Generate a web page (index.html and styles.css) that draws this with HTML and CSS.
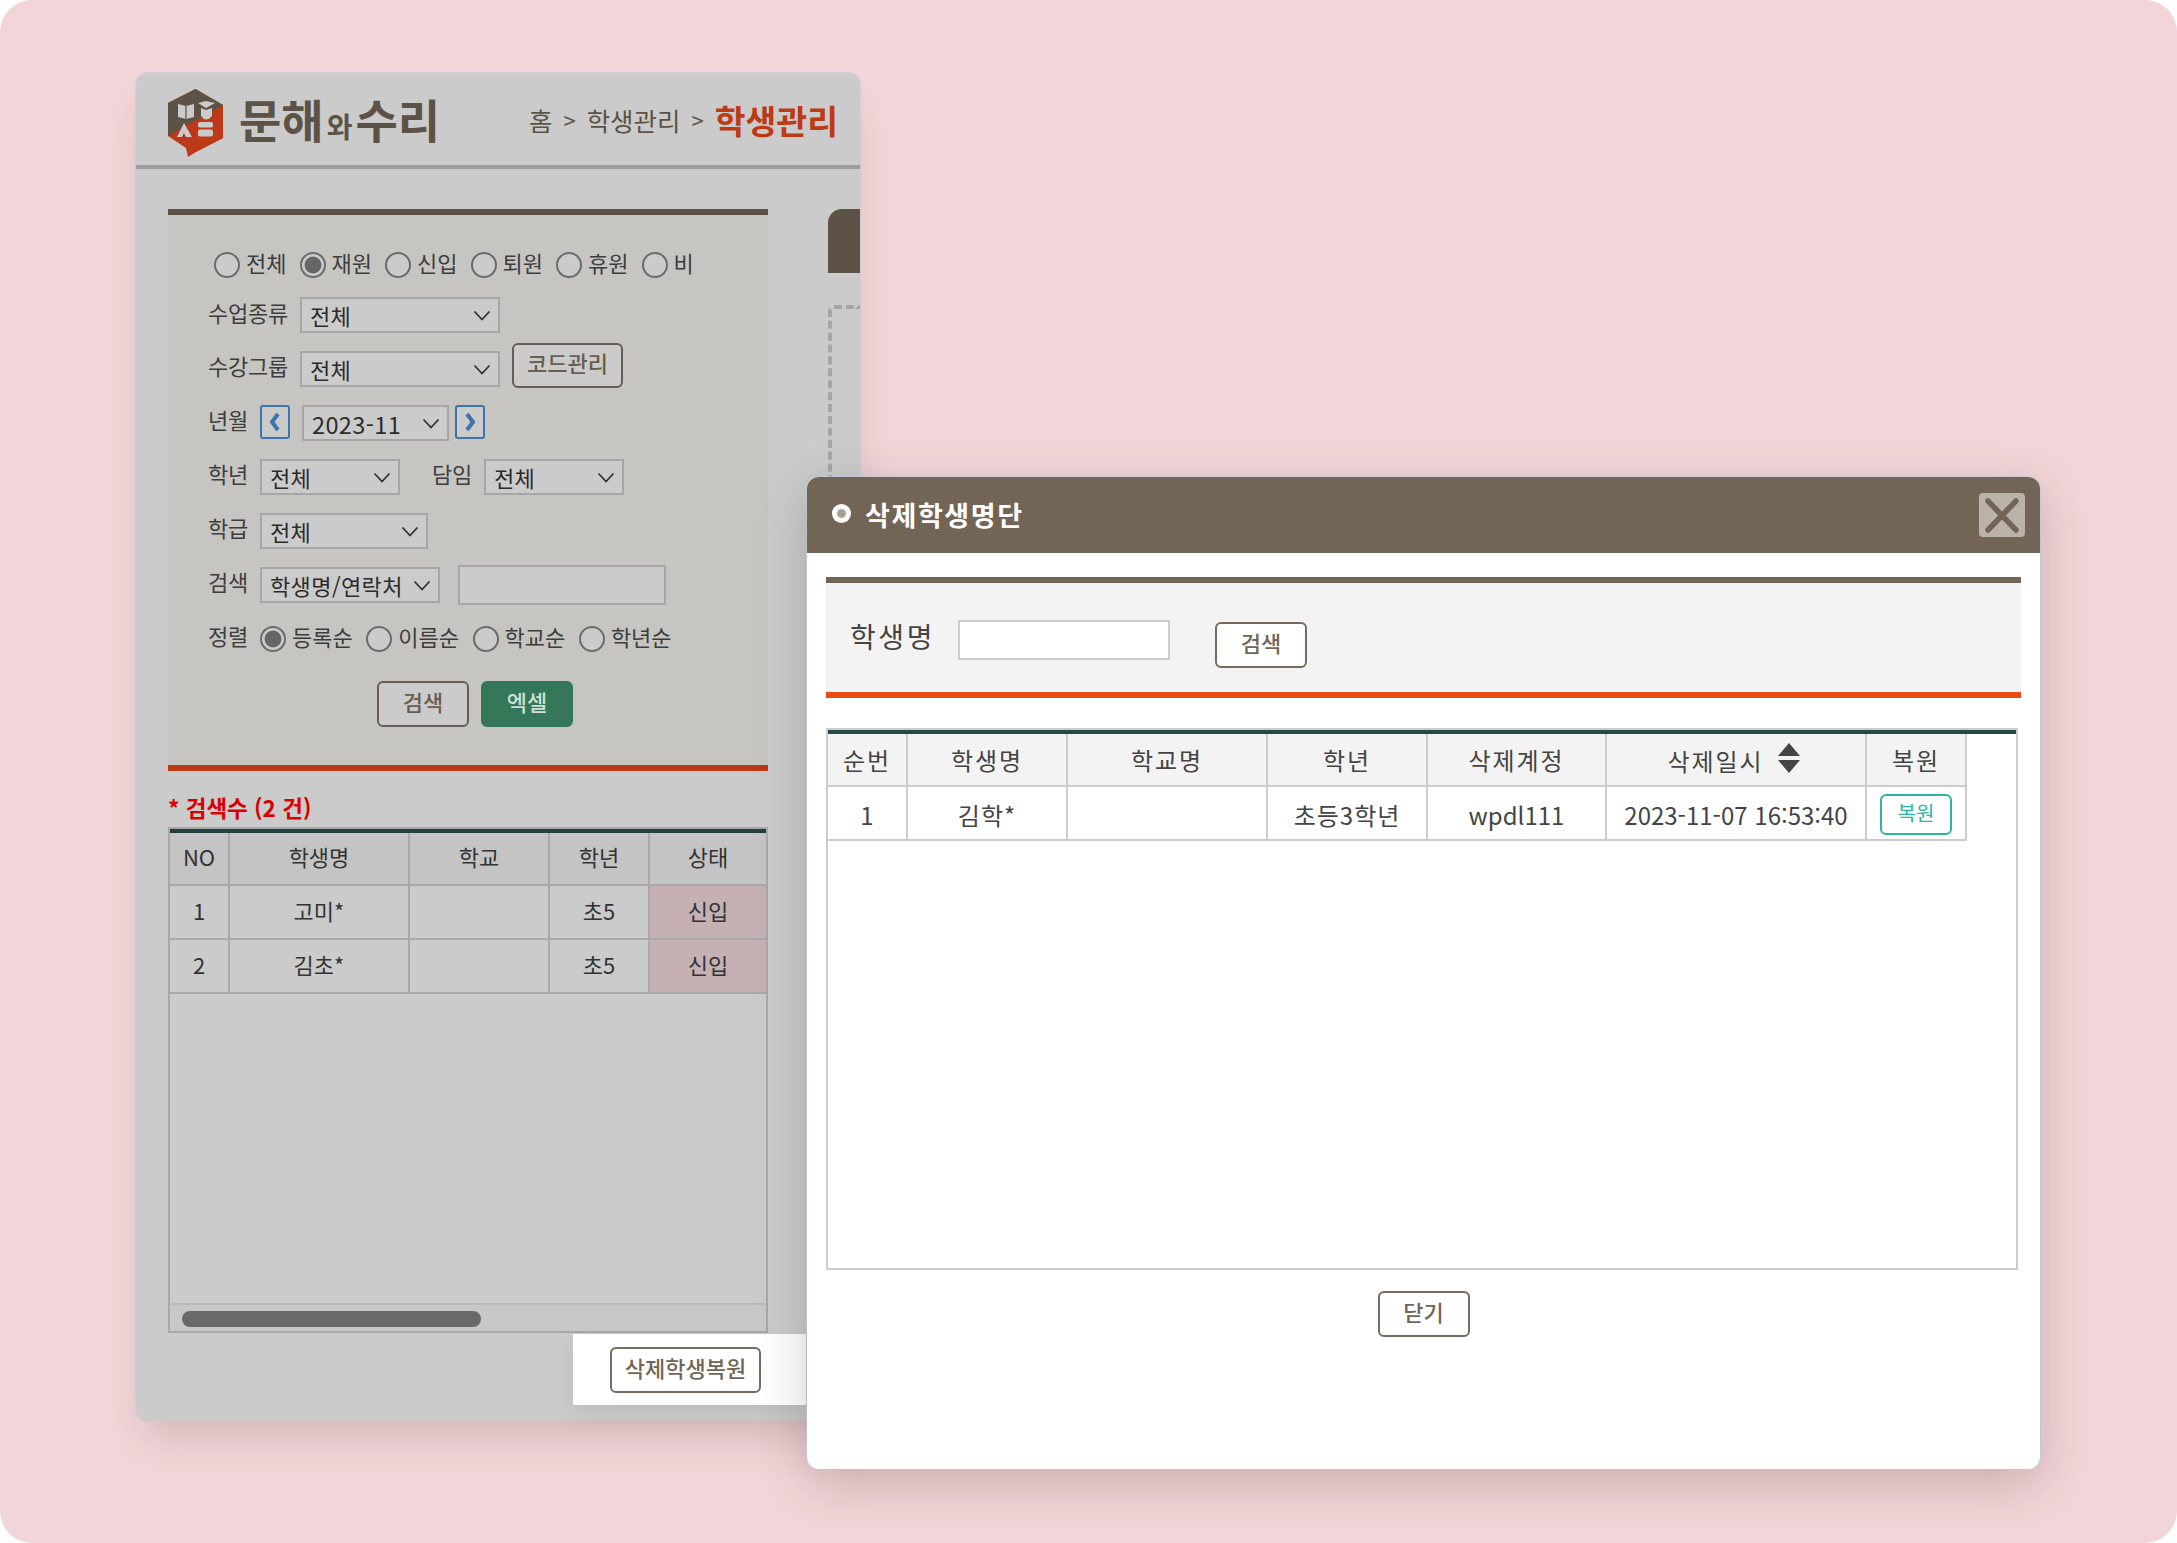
FILE: index.html
```html
<!DOCTYPE html>
<html lang="ko">
<head>
<meta charset="utf-8">
<title>삭제학생명단</title>
<link rel="stylesheet" href="styles.css">
</head>
<body>
<main class="canvas">
  <section class="win">
    <header class="win-head">
      <div class="brand">
        <svg class="logo" viewBox="0 0 56 68" width="56" height="68" aria-hidden="true">
          <path d="M27.5 0L55 16V49.3L28 63L20 68L18 59L0 47V14Z" fill="#bc3a1a"/>
          <path d="M27.5 0L55 16L0 47V14Z" fill="#5d5246"/>
          <path d="M10 15L18 17L26 15V28L18 30L10 28Z" fill="#cbcbcb"/>
          <path d="M18 17V30" stroke="#5d5246" stroke-width="1.2"/>
          <path d="M30 14L38 12L47 14L38 19Z" fill="#cbcbcb"/>
          <path d="M33 19L38 21L44 19V27Q38 34 33 27Z" fill="#cbcbcb"/>
          <path d="M16 34L24 48H18L16 44L14 48H9Z" fill="#cbcbcb"/>
          <rect x="30" y="33" width="15" height="5.5" rx="2" fill="#cbcbcb"/>
          <rect x="30" y="40.5" width="15" height="7" rx="2" fill="#cbcbcb"/>
        </svg>
        <span class="brand-name">문해<small class="brand-and">와</small>수리</span>
      </div>
      <nav class="crumbs">
        <span>홈</span><span class="crumb-sep">&gt;</span><span>학생관리</span><span class="crumb-sep">&gt;</span><strong class="crumb-now">학생관리</strong>
      </nav>
    </header>

    <div class="win-body">
      <div class="main-col">
        <form class="filter">
          <div class="row row-top">
            <label class="radio-item"><input type="radio" name="st"><span>전체</span></label>
            <label class="radio-item"><input type="radio" name="st" checked><span>재원</span></label>
            <label class="radio-item"><input type="radio" name="st"><span>신입</span></label>
            <label class="radio-item"><input type="radio" name="st"><span>퇴원</span></label>
            <label class="radio-item"><input type="radio" name="st"><span>휴원</span></label>
            <label class="radio-item"><input type="radio" name="st"><span>비</span></label>
          </div>
          <div class="row row-second">
            <span class="lbl">수업종류</span>
            <select class="sel sel-200"><option>전체</option></select>
          </div>
          <div class="row">
            <span class="lbl">수강그룹</span>
            <select class="sel sel-200"><option>전체</option></select>
            <button type="button" class="btn btn-code">코드관리</button>
          </div>
          <div class="row">
            <span class="lbl">년월</span>
            <button type="button" class="step"><svg viewBox="0 0 16 22" width="16" height="22" aria-hidden="true"><path d="M11 3L5 11L11 19" fill="none" stroke="#3c74ad" stroke-width="4"/></svg></button>
            <select class="sel sel-month"><option>2023-11</option></select>
            <button type="button" class="step step-next"><svg viewBox="0 0 16 22" width="16" height="22" aria-hidden="true"><path d="M5 3L11 11L5 19" fill="none" stroke="#3c74ad" stroke-width="4"/></svg></button>
          </div>
          <div class="row">
            <span class="lbl">학년</span>
            <select class="sel sel-140"><option>전체</option></select>
            <span class="lbl lbl-pair">담임</span>
            <select class="sel sel-140"><option>전체</option></select>
          </div>
          <div class="row">
            <span class="lbl">학급</span>
            <select class="sel sel-168"><option>전체</option></select>
          </div>
          <div class="row">
            <span class="lbl">검색</span>
            <select class="sel sel-180"><option>학생명/연락처</option></select>
            <input class="txt" type="text">
          </div>
          <div class="row">
            <span class="lbl">정렬</span>
            <label class="radio-item sort-item"><input type="radio" name="so" checked><span>등록순</span></label>
            <label class="radio-item sort-item"><input type="radio" name="so"><span>이름순</span></label>
            <label class="radio-item sort-item"><input type="radio" name="so"><span>학교순</span></label>
            <label class="radio-item sort-item"><input type="radio" name="so"><span>학년순</span></label>
          </div>
          <div class="actions">
            <button type="button" class="btn btn-act">검색</button>
            <button type="button" class="btn btn-act btn-green">엑셀</button>
          </div>
        </form>

        <p class="count">* 검색수 (2 건)</p>

        <div class="grid-box">
          <table class="tbl tbl-left">
            <colgroup><col class="c60"><col class="c180"><col class="c140"><col class="c100"><col></colgroup>
            <thead>
              <tr><th>NO</th><th>학생명</th><th>학교</th><th>학년</th><th>상태</th></tr>
            </thead>
            <tbody>
              <tr><td>1</td><td>고미*</td><td></td><td>초5</td><td class="new">신입</td></tr>
              <tr><td>2</td><td>김초*</td><td></td><td>초5</td><td class="new">신입</td></tr>
            </tbody>
          </table>
          <div class="scroll"><div class="thumb"></div></div>
        </div>
      </div>
      <aside class="side-col">
        <div class="side-tab"></div>
        <div class="side-dash"></div>
      </aside>
    </div>
  </section>

  <div class="spot"><button type="button" class="btn btn-spot">삭제학생복원</button></div>

  <section class="modal">
    <header class="modal-head">
      <h1 class="modal-title"><span class="dot"></span>삭제학생명단</h1>
      <button type="button" class="close"><svg viewBox="0 0 46 44" width="46" height="44" aria-hidden="true"><path d="M9 8L37 37M37 8L9 37" stroke="#736555" stroke-width="5.5" stroke-linecap="round"/></svg></button>
    </header>
    <div class="modal-body">
      <form class="m-search">
        <span class="m-lbl">학생명</span>
        <input class="m-input" type="text">
        <button type="button" class="btn m-btn">검색</button>
      </form>
      <div class="m-box">
        <table class="tbl tbl-modal">
          <colgroup><col class="m1"><col class="m2"><col class="m3"><col class="m4"><col class="m5"><col class="m6"><col class="m7"></colgroup>
          <thead>
            <tr>
              <th>순번</th><th>학생명</th><th>학교명</th><th>학년</th><th>삭제계정</th>
              <th class="th-sort">삭제일시<svg class="sort" viewBox="0 0 24 30" width="24" height="30" aria-hidden="true"><path d="M12 0L23 13H1Z" fill="#444"/><path d="M12 30L23 17H1Z" fill="#444"/></svg></th>
              <th>복원</th>
            </tr>
          </thead>
          <tbody>
            <tr>
              <td>1</td><td class="kr">김학*</td><td></td><td class="kr">초등3학년</td><td>wpdl111</td><td>2023-11-07 16:53:40</td>
              <td><button type="button" class="restore">복원</button></td>
            </tr>
          </tbody>
        </table>
      </div>
      <div class="m-foot"><button type="button" class="btn m-close">닫기</button></div>
    </div>
  </section>
</main>
</body>
</html>
```

FILE: styles.css
```css
* { box-sizing: border-box; }
html, body { margin: 0; padding: 0; }
body {
  background: #fff;
  font-family: "Noto Sans CJK KR", "Noto Sans", sans-serif;
  color: #3d3d3d;
}
button, select, input { font-family: inherit; }

.canvas { position: relative; width: 2177px; height: 1543px; overflow: hidden; background: #f2d5d8; border-radius: 32px; }

/* left window */
.win {
  position: absolute; left: 136px; top: 73px; width: 724px; height: 1348px;
  background: #cbcbcb; border-radius: 12px; overflow: hidden;
  box-shadow: 0 0 0 1px rgba(190,198,215,.55), 0 26px 40px -12px rgba(80,50,50,.2);
}
.win-head {
  height: 96px; border-bottom: 4px solid #9c9c9c;
  display: flex; align-items: center; justify-content: space-between;
  padding: 0 22px 0 32px;
}
.brand { display: flex; align-items: center; gap: 15px; padding-top: 8px; }
.logo { display: block; }
.brand-name { font-size: 46px; font-weight: 700; color: #5d5246; line-height: 1; padding-bottom: 11px; white-space: nowrap; }
.brand-and { font-size: 28px; font-weight: 700; margin: 0 3px; }
.crumbs { display: flex; align-items: center; font-size: 25.5px; color: #5d5246; }
.crumb-sep { font-size: 22px; margin: 0 11px; }
.crumb-now { font-size: 33.5px; font-weight: 700; color: #bc3a14; }

.win-body { display: flex; padding: 40px 0 0 32px; }
.main-col { width: 600px; flex: none; }
.side-col { flex: 1; margin-left: 60px; }
.side-tab { height: 64px; background: #5d5246; border-top-left-radius: 14px; }
.side-dash { margin-top: 32px; height: 300px; border-left: 4px dashed #a6a6a6; border-top: 4px dashed #a6a6a6; border-top-left-radius: 6px; }

.filter {
  height: 562px; background: #c6c5c1;
  border-top: 6px solid #5d5246; border-bottom: 6px solid #bc3a14;
  padding: 25px 0 0 40px;
}
.row { display: flex; align-items: center; height: 54px; }
.row-top { height: 50px; padding-left: 6px; }
.row-second { height: 52px; padding-bottom: 2px; }
.lbl { font-size: 22px; color: #3d3d3d; margin-right: 12px; line-height: 1; padding-bottom: 8px; white-space: nowrap; letter-spacing: -.25px; }
.row-second .lbl { padding-bottom: 6px; }
.lbl-pair { margin-left: 32px; }
.radio-item { display: flex; align-items: center; gap: 6px; width: 85.5px; font-size: 22px; flex: none; color: #3d3d3d; }
.radio-item span { padding-bottom: 6px; line-height: 1; }
.sort-item { width: 106.3px; }
.radio-item input {
  appearance: none; -webkit-appearance: none; margin: 0; flex: none;
  width: 26px; height: 26px; border-radius: 50%;
  border: 2px solid #6b6b6b; background: #cbcbcb;
}
.radio-item input:checked { background: radial-gradient(circle, #666 0, #666 8px, #cbcbcb 8.8px); }

.sel {
  appearance: none; -webkit-appearance: none; height: 36px; flex: none;
  border: 2px solid #a6a6a6; border-radius: 0; background-color: #cbcbcb;
  font-size: 22px; color: #2b2b2b; padding: 0 24px 0 8px; letter-spacing: .4px;
  background-image: url("data:image/svg+xml,%3Csvg xmlns='http://www.w3.org/2000/svg' width='18' height='11' viewBox='0 0 18 11'%3E%3Cpath d='M1.5 1.5L9 9.5L16.5 1.5' fill='none' stroke='%23333' stroke-width='1.8'/%3E%3C/svg%3E");
  background-repeat: no-repeat; background-position: right 7px center;
}
.sel-200 { width: 200px; }
.sel-month { width: 147px; margin: 0 6px 0 12px; padding-left: 8px; font-size: 23.5px; }
.sel-140 { width: 140px; }
.sel-168 { width: 168px; }
.sel-180 { width: 180px; }
.txt { width: 208px; height: 40px; margin-left: 18px; border: 2px solid #a6a6a6; background: #cbcbcb; padding: 0 8px; }
.step { width: 30px; height: 34px; padding: 0; border: 2px solid #3c74ad; border-radius: 3px; background: #cbcbcb; display: flex; align-items: center; justify-content: center; margin-bottom: 2px; flex: none; }

.btn {
  border: 2px solid #6a5d50; border-radius: 6px; background: #cbcbcb; color: #6a5d50;
  font-size: 22px; font-weight: 500; padding: 0 0 6px; line-height: 1;
}
.btn-code { width: 111px; height: 45px; margin: 0 0 8px 12px; }
.actions { display: flex; gap: 12px; margin: 15px 0 0 169px; }
.btn-act { width: 92px; height: 46px; }
.btn-green { background: #357859; border-color: #357859; color: #cfe0d6; }

.count {
  margin: 0; height: 56px; padding: 20px 0 4px; display: flex; align-items: center;
  font-size: 22.5px; font-weight: 700; color: #d80000;
}
.grid-box {
  width: 600px; height: 506px; border: 2px solid #a8a8a8;
  display: flex; flex-direction: column; justify-content: space-between;
}
.tbl { border-collapse: separate; border-spacing: 0; table-layout: fixed; }
.tbl th, .tbl td { text-align: center; padding: 0 0 5px; font-weight: 400; }
.tbl-left { width: 596px; border-top: 4px solid #1f4240; font-size: 22px; color: #333; }
.tbl-left th, .tbl-left td { border-right: 2px solid #a8a8a8; border-bottom: 2px solid #a8a8a8; height: 54px; }
.tbl-left th { background: #c4c4c4; height: 53px; }
.tbl-left th:last-child, .tbl-left td:last-child { border-right: 0; }
.tbl-left td.new { background: #c5b0b3; }
.c60 { width: 60px; } .c180 { width: 180px; } .c140 { width: 140px; } .c100 { width: 100px; }
.scroll { height: 28px; border-top: 2px solid #bababa; background: #c8c8c8; padding: 6px 0 0 12px; }
.thumb { width: 299px; height: 16px; border-radius: 8px; background: #696969; }

/* highlighted hole */
.spot {
  position: absolute; left: 573px; top: 1334px; width: 233px; height: 71px;
  background: #fff; display: flex; align-items: center; padding-left: 37px;
  box-shadow: 0 8px 20px rgba(0,0,0,.08);
}
.btn-spot { width: 151px; height: 46px; background: #fff; border-color: #7a6a5c; color: #736555; white-space: nowrap; }

/* modal */
.modal {
  position: absolute; left: 807px; top: 477px; width: 1233px; height: 992px;
  background: #fff; border-radius: 12px; overflow: hidden;
  box-shadow: 0 0 0 1px rgba(190,198,215,.6), 0 14px 50px rgba(70,40,40,.24);
}
.modal-head {
  height: 76px; background: #736555; display: flex; align-items: center; justify-content: space-between;
  padding: 0 15px 0 25px;
}
.modal-title { margin: 0; display: flex; align-items: center; gap: 14px; font-size: 27px; font-weight: 700; color: #fff; letter-spacing: 1.6px; line-height: 1; padding-bottom: 2px; }
.dot { width: 19px; height: 19px; border-radius: 50%; background: radial-gradient(circle, #a79e93 0, #a79e93 3.5px, #fff 5.5px); margin-top: -2px; }
.close { width: 46px; height: 44px; padding: 0; border: 0; border-radius: 4px; background: #bab3a9; display: block; }
.close svg { display: block; }
.modal-body { padding: 24px 19px 0; }
.m-search {
  height: 121px; background: #f3f3f3; border-top: 6px solid #736555; border-bottom: 6px solid #ea4b12;
  display: flex; align-items: center; padding-left: 24px;
}
.m-lbl { font-size: 28px; color: #444; width: 108px; letter-spacing: 2.6px; line-height: 1; padding-bottom: 3px; }
.m-input { width: 212px; height: 40px; border: 2px solid #ccc; background: #fff; margin-top: 5px; }
.m-btn, .m-close { width: 92px; height: 46px; background: #fff; border-color: #7a6a5c; color: #736555; }
.m-btn { margin: 15px 0 0 45px; }
.m-box { margin-top: 30px; width: 1192px; height: 542px; border: 2px solid #ccc; }
.m-box::before { content: ""; display: block; height: 4px; background: #1f4a48; }
.tbl-modal { width: 1139px; font-size: 24px; color: #444; }
.tbl-modal th, .tbl-modal td { border-right: 2px solid #ccc; border-bottom: 2px solid #ccc; height: 54px; white-space: nowrap; }
.tbl-modal th { background: #f3f3f3; height: 53px; padding: 0 0 1px; letter-spacing: 1.9px; }
.tbl-modal th.th-sort { padding-right: 3px; }
.tbl-modal td { padding: 2px 0 0; }
.tbl-modal td.kr { letter-spacing: 1px; }
.m1 { width: 80px; } .m2 { width: 160px; } .m3 { width: 200px; } .m4 { width: 160px; } .m5 { width: 179px; } .m6 { width: 260px; } .m7 { width: 100px; }
.sort { margin-left: 14px; vertical-align: 0; position: relative; top: 2px; }
.restore { width: 72px; height: 41px; border: 2px solid #2bb5a0; border-radius: 6px; background: #fff; color: #2bb5a0; font-size: 20px; padding: 0 0 3px; line-height: 1; margin-top: 0; }
.m-foot { display: flex; justify-content: center; padding-top: 21px; }
```
